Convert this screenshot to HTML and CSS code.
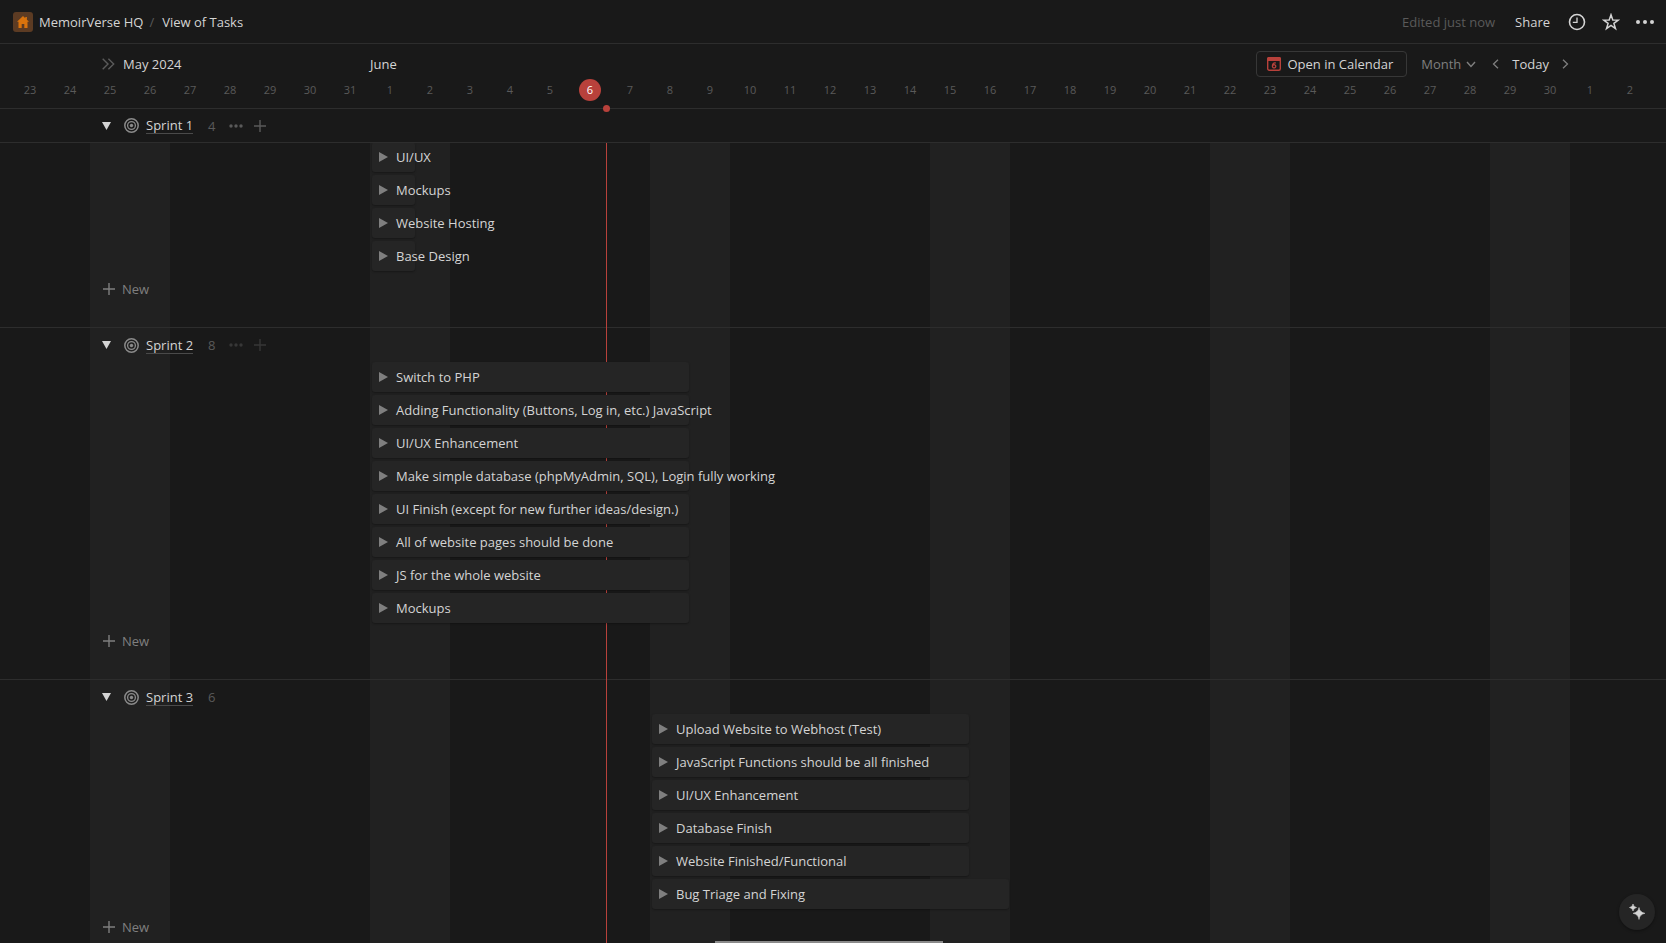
FILE: index.html
```html
<!DOCTYPE html>
<html lang="en">
<head>
<meta charset="utf-8">
<title>View of Tasks</title>
<link rel="stylesheet" href="styles.css">
</head>
<body>
<svg class="defs" aria-hidden="true">
  <symbol id="target" viewBox="0 0 15 15"><g fill="none" stroke="currentColor"><circle cx="7.500" cy="7.500" r="6.700" stroke-width="1.500"/><circle cx="7.500" cy="7.500" r="3.900" stroke-width="1.300"/></g><circle cx="7.500" cy="7.500" r="1.700" fill="currentColor"/></symbol>
  <symbol id="plus" viewBox="0 0 12 12"><path d="M6 0v12M0 6h12" stroke="currentColor" stroke-width="1.4"/></symbol>
  <symbol id="dots" viewBox="0 0 14 4"><g fill="currentColor"><circle cx="2" cy="2" r="1.7"/><circle cx="7" cy="2" r="1.7"/><circle cx="12" cy="2" r="1.7"/></g></symbol>
  <symbol id="down" viewBox="0 0 9 8"><path d="M0 0h9L4.500 8z" fill="currentColor"/></symbol>
  <symbol id="right" viewBox="0 0 9 10"><path d="M0 0v10l9-5z" fill="currentColor"/></symbol>
</svg>

<header class="topbar">
  <nav class="crumbs">
    <a class="crumb" href="#"><span class="home"><svg width="12" height="12" viewBox="0 0 12 12"><path d="M6 0L0 5.700h1.500V12h3.200V8h2.600v4h3.200V5.700H12L9.900 3.700V1H8.300v1.200z" fill="currentColor"/></svg></span>MemoirVerse HQ</a>
    <span class="slash">/</span>
    <a class="crumb" href="#">View of Tasks</a>
  </nav>
  <div class="actions">
    <span class="edited">Edited just now</span>
    <button class="plain share">Share</button>
    <button class="plain" aria-label="Updates"><svg width="18" height="18" viewBox="0 0 18 18" fill="none" stroke="currentColor"><circle cx="9" cy="9" r="7.500" stroke-width="1.600"/><path d="M9 4.500V9.300H4.800" stroke-width="1.300"/></svg></button>
    <button class="plain" aria-label="Favorite"><svg width="18" height="18" viewBox="0 0 18 18" fill="none" stroke="currentColor" stroke-width="1.500" stroke-linejoin="miter"><path d="M9 1.800l1.800 5.200 5.500.1-4.400 3.300 1.600 5.300L9 12.500l-4.500 3.200 1.600-5.300L1.700 7.100l5.500-.1z"/></svg></button>
    <button class="plain" aria-label="More"><svg width="18" height="4" viewBox="0 0 18 4" fill="currentColor"><circle cx="2" cy="2" r="2"/><circle cx="9" cy="2" r="2"/><circle cx="16" cy="2" r="2"/></svg></button>
  </div>
</header>

<section class="timehead">
  <div class="toolbar">
    <div class="month first"><button class="plain faint" aria-label="Show table"><svg width="13" height="12" viewBox="0 0 13 12" fill="none" stroke="currentColor" stroke-width="1.400"><path d="M.7.700L6 6 .7 11.300M6.400.700L11.700 6l-5.300 5.300"/></svg></button>May 2024</div>
    <div class="month">June</div>
    <div class="controls">
      <button class="open"><svg width="14" height="14" viewBox="0 0 14 14"><rect x=".7" y=".7" width="12.600" height="12.600" rx="1.500" fill="none" stroke="currentColor" stroke-width="1.400"/><path d="M0 1.500Q0 0 1.500 0h11Q14 0 14 1.500V4H0z" fill="currentColor"/><path d="M8.800 6.100Q7.500 5.500 6.200 6.600 5.300 7.600 5.400 9.300M8.800 9.300a1.700 1.600 0 1 1-3.400 0a1.700 1.600 0 1 1 3.400 0z" fill="none" stroke="currentColor" stroke-width="1.300"/></svg><span>Open in Calendar</span></button>
      <button class="plain scale">Month<svg width="10" height="7" viewBox="0 0 10 7" fill="none" stroke="currentColor" stroke-width="1.400"><path d="M1 1l4 4.500L9 1"/></svg></button>
      <div class="pager">
        <button class="plain muted" aria-label="Previous"><svg width="7" height="10" viewBox="0 0 7 10" fill="none" stroke="currentColor" stroke-width="1.300"><path d="M6 .700L1.500 5 6 9.300"/></svg></button>
        <button class="plain">Today</button>
        <button class="plain muted" aria-label="Next"><svg width="7" height="10" viewBox="0 0 7 10" fill="none" stroke="currentColor" stroke-width="1.300"><path d="M1 .700L5.500 5 1 9.300"/></svg></button>
      </div>
    </div>
  </div>
  <div class="days">
    <span>23</span><span>24</span><span>25</span><span>26</span><span>27</span><span>28</span><span>29</span><span>30</span><span>31</span><span>1</span><span>2</span><span>3</span><span>4</span><span>5</span><span class="today">6</span><span>7</span><span>8</span><span>9</span><span>10</span><span>11</span><span>12</span><span>13</span><span>14</span><span>15</span><span>16</span><span>17</span><span>18</span><span>19</span><span>20</span><span>21</span><span>22</span><span>23</span><span>24</span><span>25</span><span>26</span><span>27</span><span>28</span><span>29</span><span>30</span><span>1</span><span>2</span>
  </div>
  <i class="nowdot"></i>
</section>

<main class="board">
  <i class="nowline"></i>
  <section class="sprint">
    <div class="sprinthead pinned">
      <button class="plain" aria-label="Collapse Sprint 1"><svg width="9" height="8"><use href="#down"/></svg></button>
      <a class="name" href="#"><svg width="15" height="15"><use href="#target"/></svg><span>Sprint 1</span></a>
      <span class="count">4</span>
      <button class="plain faint" aria-label="Options"><svg width="14" height="4"><use href="#dots"/></svg></button>
      <button class="plain faint" aria-label="Add"><svg width="12" height="12"><use href="#plus"/></svg></button>
    </div>
    <div class="tasks">
      <div class="bar short" style="grid-column:10/span 1"><svg width="9" height="10"><use href="#right"/></svg>UI/UX</div>
      <div class="bar short" style="grid-column:10/span 1"><svg width="9" height="10"><use href="#right"/></svg>Mockups</div>
      <div class="bar short" style="grid-column:10/span 1"><svg width="9" height="10"><use href="#right"/></svg>Website Hosting</div>
      <div class="bar short" style="grid-column:10/span 1"><svg width="9" height="10"><use href="#right"/></svg>Base Design</div>
    </div>
    <button class="plain new"><svg width="12" height="12"><use href="#plus"/></svg>New</button>
  </section>
  <section class="sprint">
    <div class="sprinthead">
      <button class="plain" aria-label="Collapse Sprint 2"><svg width="9" height="8"><use href="#down"/></svg></button>
      <a class="name" href="#"><svg width="15" height="15"><use href="#target"/></svg><span>Sprint 2</span></a>
      <span class="count">8</span>
      <button class="plain ghost" aria-label="Options"><svg width="14" height="4"><use href="#dots"/></svg></button>
      <button class="plain ghost" aria-label="Add"><svg width="12" height="12"><use href="#plus"/></svg></button>
    </div>
    <div class="tasks">
      <div class="bar" style="grid-column:10/span 8"><svg width="9" height="10"><use href="#right"/></svg>Switch to PHP</div>
      <div class="bar" style="grid-column:10/span 8"><svg width="9" height="10"><use href="#right"/></svg>Adding Functionality (Buttons, Log in, etc.) JavaScript</div>
      <div class="bar" style="grid-column:10/span 8"><svg width="9" height="10"><use href="#right"/></svg>UI/UX Enhancement</div>
      <div class="bar" style="grid-column:10/span 8"><svg width="9" height="10"><use href="#right"/></svg>Make simple database (phpMyAdmin, SQL), Login fully working</div>
      <div class="bar" style="grid-column:10/span 8"><svg width="9" height="10"><use href="#right"/></svg>UI Finish (except for new further ideas/design.)</div>
      <div class="bar" style="grid-column:10/span 8"><svg width="9" height="10"><use href="#right"/></svg>All of website pages should be done</div>
      <div class="bar" style="grid-column:10/span 8"><svg width="9" height="10"><use href="#right"/></svg>JS for the whole website</div>
      <div class="bar" style="grid-column:10/span 8"><svg width="9" height="10"><use href="#right"/></svg>Mockups</div>
    </div>
    <button class="plain new"><svg width="12" height="12"><use href="#plus"/></svg>New</button>
  </section>
  <section class="sprint">
    <div class="sprinthead">
      <button class="plain" aria-label="Collapse Sprint 3"><svg width="9" height="8"><use href="#down"/></svg></button>
      <a class="name" href="#"><svg width="15" height="15"><use href="#target"/></svg><span>Sprint 3</span></a>
      <span class="count">6</span>
    </div>
    <div class="tasks">
      <div class="bar" style="grid-column:17/span 8"><svg width="9" height="10"><use href="#right"/></svg>Upload Website to Webhost (Test)</div>
      <div class="bar" style="grid-column:17/span 8"><svg width="9" height="10"><use href="#right"/></svg>JavaScript Functions should be all finished</div>
      <div class="bar" style="grid-column:17/span 8"><svg width="9" height="10"><use href="#right"/></svg>UI/UX Enhancement</div>
      <div class="bar" style="grid-column:17/span 8"><svg width="9" height="10"><use href="#right"/></svg>Database Finish</div>
      <div class="bar" style="grid-column:17/span 8"><svg width="9" height="10"><use href="#right"/></svg>Website Finished/Functional</div>
      <div class="bar" style="grid-column:17/span 9"><svg width="9" height="10"><use href="#right"/></svg>Bug Triage and Fixing</div>
    </div>
    <button class="plain new"><svg width="12" height="12"><use href="#plus"/></svg>New</button>
  </section>
  <i class="scrollthumb"></i>
</main>
<button class="assistant" aria-label="Ask AI"><svg width="16" height="16" viewBox="0 0 16 16" fill="currentColor"><path d="M10 3.500Q10.700 8.300 16 9.300 10.700 10.300 10 15.500 9.300 10.300 4 9.300 9.300 8.300 10 3.500z" stroke="currentColor" stroke-width=".5"/><path d="M4 0Q4.500 3 7.500 3.500 4.500 4 4 7 3.500 4 .500 3.500 3.500 3 4 0z" stroke="currentColor" stroke-width=".6"/></svg></button>
</body>
</html>
```
FILE: styles.css
```css
* { box-sizing: border-box; }
body {
  margin: 0;
  height: 100vh;
  display: flex;
  flex-direction: column;
  overflow: hidden;
  background: #191919;
  color: #d4d4d4;
  font: 13px/20px "Open Sans", "Noto Sans", sans-serif;
}
svg { display: block; flex: none; }
a { color: inherit; text-decoration: none; }
.defs { position: absolute; width: 0; height: 0; }
.plain {
  display: flex;
  align-items: center;
  padding: 0;
  border: 0;
  background: none;
  color: inherit;
  font: inherit;
}
.plain.faint { color: #5a5a5a; }
.plain.muted { color: #7f7f7f; }
.plain.ghost { color: #373737; }

.topbar {
  flex: none;
  height: 44px;
  display: flex;
  align-items: center;
  justify-content: space-between;
  padding: 0 12px 0 13px;
  border-bottom: 1px solid #2d2d2d;
}
.crumbs, .crumb, .actions, .controls, .pager { display: flex; align-items: center; }
.crumb { gap: 6px; }
.slash { padding: 0 8px 0 6px; color: #5a5a5a; }
.home {
  width: 20px;
  height: 20px;
  display: grid;
  place-items: center;
  border-radius: 3px;
  background: #5c3b23;
  color: #d9730d;
}
.actions { gap: 16px; }
.edited { color: #5a5a5a; padding-right: 4px; }
.share { padding-right: 2px; }

.timehead {
  flex: none;
  position: relative;
  border-bottom: 1px solid #2d2d2d;
  padding: 7px 0;
}
.toolbar { display: flex; align-items: center; padding: 0 97px 0 102px; }
.month { display: flex; align-items: center; gap: 8px; }
.month.first { width: 268px; }
.controls { margin-left: auto; gap: 14px; }
.open {
  height: 26px;
  display: flex;
  align-items: center;
  gap: 6px;
  padding: 0 13px 0 10px;
  border: 1px solid #373737;
  border-radius: 4px;
  background: none;
  color: #b8413b;
  font: inherit;
}
.open span { color: #d4d4d4; }
.scale { gap: 5px; color: #7f7f7f; }
.pager { gap: 13px; padding-left: 2px; }
.days {
  display: grid;
  grid-template-columns: repeat(41, 40px);
  justify-items: center;
  margin: 2px 0 0 10px;
  color: #5a5a5a;
  font-size: 11px;
  line-height: 22px;
}
.today { width: 22px; border-radius: 50%; background: #b8413b; color: #fff; text-align: center; }
.nowdot {
  position: absolute;
  left: 603px;
  bottom: -4px;
  width: 7px;
  height: 7px;
  border-radius: 50%;
  background: #b8413b;
  z-index: 3;
}

.board {
  flex: 1;
  min-height: 0;
  position: relative;
  overflow: hidden;
  background: repeating-linear-gradient(90deg, #212121 0 80px, #191919 80px 280px) 90px 0 / calc(100% + 280px) 100% no-repeat;
}
.nowline { position: absolute; left: 606px; top: 0; bottom: 0; width: 1px; background: #b8413b; }
.sprint + .sprint { border-top: 1px solid #2d2d2d; }
.sprint { padding-bottom: 23px; }
.sprinthead { height: 34px; display: flex; align-items: center; padding-left: 102px; }
.sprinthead.pinned {
  position: relative;
  z-index: 2;
  height: 33px;
  background: #191919;
  box-shadow: 0 1px #2d2d2d;
}
.name { display: flex; align-items: center; gap: 7px; padding: 0 15px 0 13px; }
.name svg { color: #8a8a8a; }
.name span { line-height: 16px; border-bottom: 1px solid #4a4a4a; }
.count { color: #5a5a5a; width: 21px; }
.count + .plain { margin-right: 11px; }
.tasks {
  display: grid;
  grid-template-columns: repeat(41, 40px);
  gap: 3px 0;
  padding-left: 10px;
}
.bar {
  position: relative;
  height: 30px;
  display: flex;
  align-items: center;
  gap: 8px;
  margin: 0 1px 0 2px;
  padding-left: 7px;
  border-radius: 3px;
  background: #252525;
  box-shadow: 0 1px 2px rgba(0, 0, 0, .3);
  white-space: nowrap;
}
.bar.short { width: 43px; }
.bar svg { color: #7f7f7f; }
.new { height: 30px; margin: 3px 0 0 103px; gap: 7px; color: #7f7f7f; }
.scrollthumb { position: absolute; left: 715px; bottom: 0; width: 228px; height: 2px; background: #8a8a8a; }
.assistant {
  position: fixed;
  right: 11px;
  bottom: 13px;
  width: 36px;
  height: 36px;
  display: grid;
  place-items: center;
  padding: 0;
  border: 0;
  border-radius: 50%;
  background: #252525;
  color: #d4d4d4;
  box-shadow: 0 1px 3px rgba(0, 0, 0, .4);
}
```
